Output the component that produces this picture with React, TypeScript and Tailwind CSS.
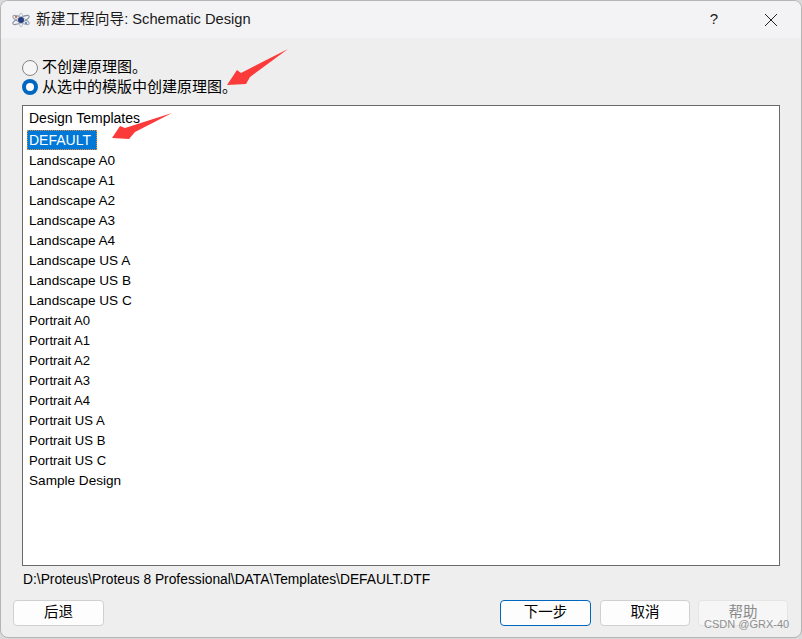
const templates = [
  "Landscape A0",
  "Landscape A1",
  "Landscape A2",
  "Landscape A3",
  "Landscape A4",
  "Landscape US A",
  "Landscape US B",
  "Landscape US C",
  "Portrait A0",
  "Portrait A1",
  "Portrait A2",
  "Portrait A3",
  "Portrait A4",
  "Portrait US A",
  "Portrait US B",
  "Portrait US C",
  "Sample Design",
];

const font = "font-['Liberation_Sans','Noto_Sans_CJK_SC',sans-serif]";

const AtomIcon = () => (
  <svg width="20" height="16" viewBox="0 0 20 16" fill="none">
    <ellipse cx="10" cy="8" rx="9" ry="2.6" stroke="#9aa3b2" strokeWidth="1" transform="rotate(25 10 8)" />
    <ellipse cx="10" cy="8" rx="9" ry="2.6" stroke="#8b93a3" strokeWidth="1" transform="rotate(-25 10 8)" />
    <ellipse cx="10" cy="8" rx="2" ry="7" stroke="#b9bfca" strokeWidth="1" />
    <circle cx="10" cy="8" r="3" fill="#27407e" />
    <circle cx="5" cy="5" r="1" fill="#c0522c" />
    <circle cx="15" cy="11" r="1" fill="#3b6fb5" />
  </svg>
);

const Radio = ({ checked }: { checked?: boolean }) =>
  checked ? (
    <span className="flex h-4 w-4 items-center justify-center rounded-full bg-[#0067c0]">
      <span className="h-2 w-2 rounded-full bg-white" />
    </span>
  ) : (
    <span className="h-4 w-4 rounded-full border border-[#858585] bg-[#f6f6f6]" />
  );

const Button = ({
  label,
  className,
}: {
  label: string;
  className: string;
}) => (
  <button
    className={`flex h-[26px] items-center justify-center rounded-[4px] border text-[14.5px] ${className}`}
  >
    {label}
  </button>
);

export default function App() {
  return (
    <div className={`relative h-[639px] w-[802px] overflow-hidden bg-[#d9d9d9] ${font}`}>
      <div className="flex h-[638px] w-[802px] flex-col overflow-hidden rounded-[8px] border border-[#b5b5b5] bg-[#eeeeee]">
        <div className="flex h-[37px] shrink-0 items-center bg-[#f3f3f5] pl-[10px] text-[#1a1a1a]">
          <AtomIcon />
          <span className="ml-[5px] text-[14.7px]">新建工程向导: Schematic Design</span>
          <span className="ml-auto mr-[46px] text-[15px]">?</span>
          <svg className="mr-[23px]" width="14" height="14" viewBox="0 0 14 14" stroke="#222" strokeWidth="1">
            <path d="M1 1 L13 13 M13 1 L1 13" />
          </svg>
        </div>

        <div className="flex flex-col px-[21px] pt-[20px] text-[15px] text-black">
          <label className="flex h-[19px] items-center gap-[4px]">
            <Radio />
            <span>不创建原理图。</span>
          </label>
          <label className="flex h-[20px] items-center gap-[4px]">
            <Radio checked />
            <span>从选中的模版中创建原理图。</span>
          </label>
        </div>

        <div className="mx-[21px] mt-[8px] h-[461px] border border-[#6a6a6a] bg-white pt-[2px] text-black">
          <div className="flex h-[20px] items-center pl-[6px] text-[14px]">Design Templates</div>
          <div className="mb-[1px] mt-[2px] flex h-[20px] items-center pl-[4px] text-[14px]">
            <span className="w-[70px] border border-dotted border-[#e08a3c] bg-[#0078d7] px-[1px] leading-[18px] text-white">
              DEFAULT
            </span>
          </div>
          {templates.map((name) => (
            <div
              key={name}
              className={`flex h-[20px] items-center pl-[6px] ${name.startsWith("Portrait") ? "text-[13.1px]" : "text-[13.6px]"}`}
            >
              {name}
            </div>
          ))}
        </div>

        <div className="mx-[22px] mt-[6px] flex h-[16px] items-center text-[13.8px] text-black">
          D:\Proteus\Proteus 8 Professional\DATA\Templates\DEFAULT.DTF
        </div>

        <div className="mt-[12px] flex px-[12px]">
          <Button label="后退" className="w-[91px] border-[#d0d0d0] bg-[#fdfdfd] text-black" />
          <Button label="下一步" className="ml-[396px] w-[91px] border-[#0067c0] bg-[#fdfdfd] text-black" />
          <Button label="取消" className="ml-[9px] w-[90px] border-[#d0d0d0] bg-[#fdfdfd] text-black" />
          <Button label="帮助" className="ml-[8px] w-[90px] border-[#e5e5e5] bg-[#f6f6f6] text-[#8a8a8a]" />
        </div>
      </div>

      <svg className="absolute left-0 top-0" width="802" height="639" fill="#fb3a3a">
        <polygon points="288,49 250,77 246,84 227,85 237,70 241,73" />
        <polygon points="172,113 135,132 129,139 112,138 120,126 125,128" />
      </svg>

      <span className="absolute left-[704px] top-[616px] whitespace-nowrap text-[11px] leading-[16px] text-[#8f8f8f]">
        CSDN @GRX-40
      </span>
    </div>
  );
}
